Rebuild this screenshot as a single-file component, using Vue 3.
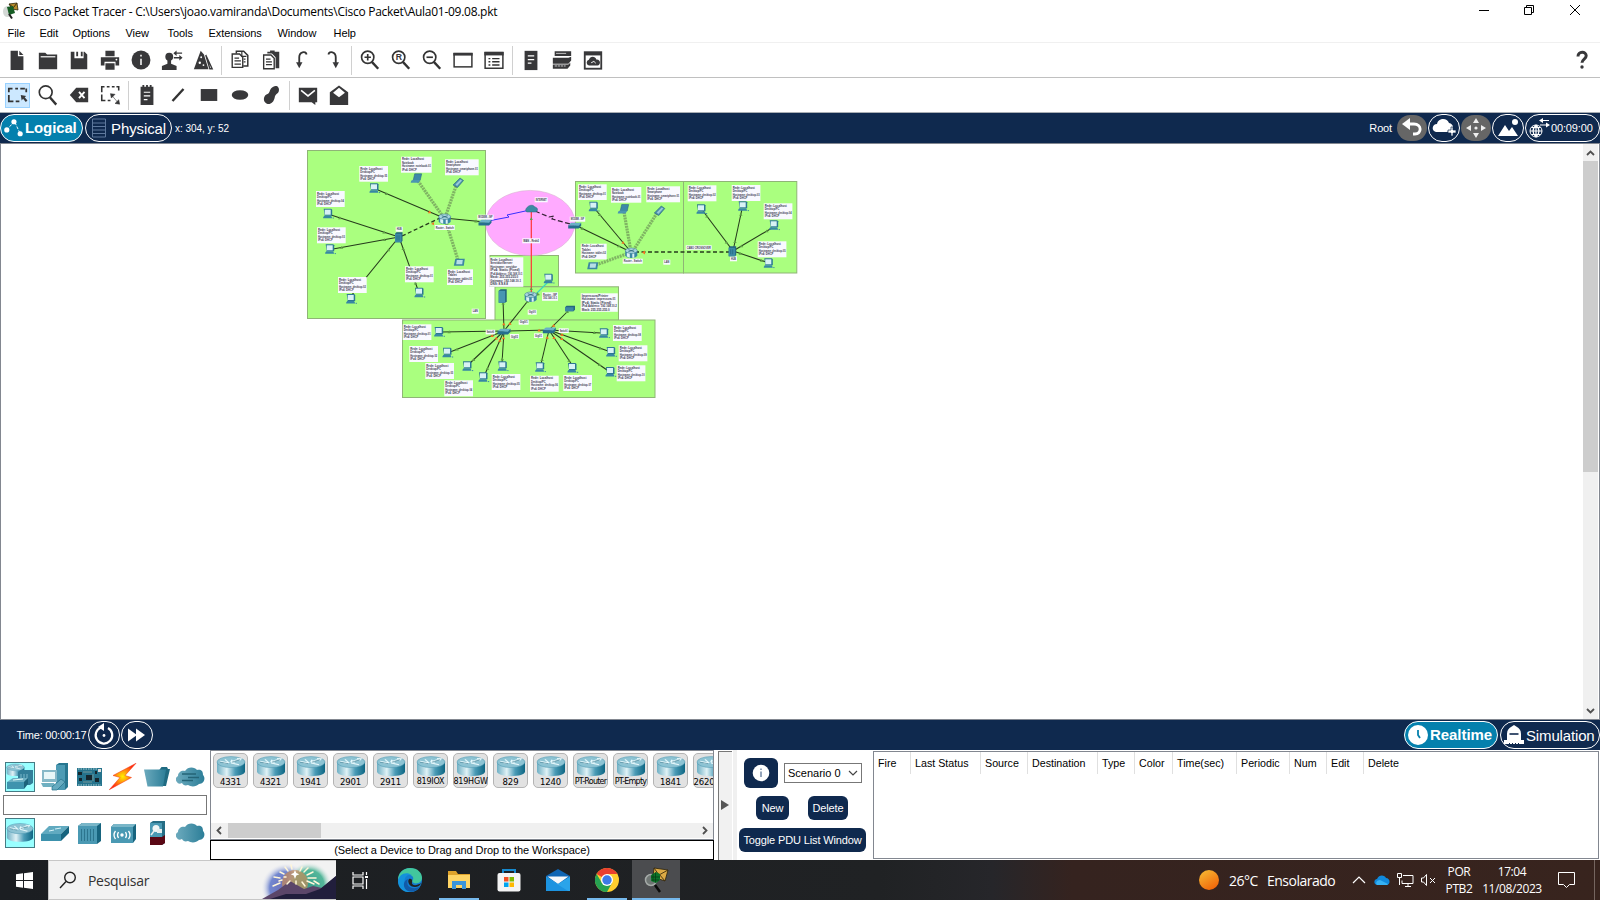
<script setup>
const menus = [
  ['File', 32], ['Edit', 33], ['Options', 53], ['View', 42], ['Tools', 41],
  ['Extensions', 69], ['Window', 56], ['Help', 40],
]

const ic = {
  file: '<path d="M5 2h8v6h6v15H5z"/><path d="M14.500 2l4.500 4.500h-4.500z"/>',
  folder: '<path d="M2 4h7l2 2h11v16H2z"/><path d="M4 8.500h16" stroke="#fff" stroke-width="1.300"/>',
  save: '<path d="M3 3h4v7h10V3h1l3 3v16H3z"/><path d="M9 3h2v5H9zM14 3h2v5h-2z"/>',
  print: '<path d="M7 2h10v6H7zM2 9h20v9h-4v-4H6v4H2zM7 15.500h10v7H7z"/><circle cx="19" cy="11.500" r="1" fill="#fff"/>',
  info: '<circle cx="12" cy="12" r="10.300"/><path d="M12 10.500v7M12 6.200v2" stroke="#ddd" stroke-width="2"/>',
  user: '<circle cx="9" cy="8.500" r="4.300"/><path d="M7 11h4v5l6 2.500V23H1v-4.500L7 16z"/><path d="M15 4.500h8M14 9.500h7" fill="none" stroke="#38383a" stroke-width="1.500"/><path d="M17 1.500v6l-3.500-3zM20 6.500v6l3.500-3z"/>',
  prism: '<path d="M9.500 2L13 6l5 16H2z"/><path d="M15 6.500l7 15h-2.500z" fill="none" stroke="#38383a" stroke-width="1.500"/><circle cx="10" cy="9" r="1" fill="#fff"/><circle cx="8.500" cy="15" r="1.300" fill="#fff"/><circle cx="12.500" cy="17.500" r="1" fill="#fff"/>',
  copy: '<path d="M3.500 5.500h8l3.500 3.500v11H3.500z" fill="#fff" stroke="#333" stroke-width="1.500"/><path d="M8 5V2.500h8l4.500 4.500v11.500h-5" fill="none" stroke="#333" stroke-width="1.600"/><path d="M6 10h5M6 13h7M6 16.500h7M16 8h2M16 11h2M16 14h2M14 3v5h5" fill="none" stroke="#333" stroke-width="1.300"/>',
  paste: '<path d="M8 3h3V1.500h5V3h5v18h-4V9l-4-4H8z"/><path d="M4 6.500h8l3.500 3.500v11.500H4z" fill="#fff" stroke="#333" stroke-width="1.500"/><path d="M6.500 11h5M6.500 14h6.500M6.500 17h6.500" stroke="#333" stroke-width="1.300"/>',
  undo: '<path d="M17 6c-1-4.500-8-3-8 3v7" fill="none" stroke="#333" stroke-width="2"/><path d="M5.500 14.500h7L9 21z"/>',
  redo: '<path d="M7 6c1-4.500 8-3 8 3v7" fill="none" stroke="#333" stroke-width="2"/><path d="M11.500 14.500h7L15 21z"/>',
  zin: '<circle cx="9.500" cy="9" r="6.700" fill="none" stroke="#333" stroke-width="1.800"/><path d="M14 14l7 7.500" stroke="#333" stroke-width="2.600"/><path d="M6 9h7M9.500 5.500v7" stroke="#333" stroke-width="1.800"/>',
  zr: '<circle cx="9.500" cy="9" r="6.700" fill="none" stroke="#333" stroke-width="1.800"/><path d="M14 14l7 7.500" stroke="#333" stroke-width="2.600"/><text x="6.300" y="12.500" font-size="9.500" font-weight="bold" font-family="Liberation Sans, sans-serif">R</text>',
  zout: '<circle cx="9.500" cy="9" r="6.700" fill="none" stroke="#333" stroke-width="1.800"/><path d="M14 14l7 7.500" stroke="#333" stroke-width="2.600"/><path d="M6 9h7" stroke="#333" stroke-width="1.800"/>',
  win: '<rect x="2.300" y="5" width="19.400" height="14.500" fill="none" stroke="#333" stroke-width="1.600"/><path d="M1.500 4.200h21v3h-21z"/>',
  list: '<rect x="2.300" y="4" width="19.400" height="17" fill="none" stroke="#333" stroke-width="1.600"/><path d="M1.500 3h21v4h-21z"/><path d="M6 10.500h2M10 10.500h8M6 14h2M10 14h8M6 17.500h2M10 17.500h8" stroke="#333" stroke-width="1.600"/>',
  doc: '<path d="M5 2h14v21H5z"/><path d="M8.500 7.500h7M8.500 11.500h7M8.500 15.500h4" stroke="#fff" stroke-width="1.300"/>',
  stack: '<path d="M4 2.500h18v5H4zM2 9.500h17l3-1v4l-3 3.500H2zM2 17h17l2-2v3l-3 3.500H2z"/><path d="M5.500 4.800h11" stroke="#ccc" stroke-width="1"/><path d="M4 18.500h12" stroke="#fff" stroke-width=".8" stroke-dasharray="2.500 .8"/>',
  cloudwin: '<path d="M2 2.500h20v20H2z"/><path d="M4 7h16v13.500H4z" fill="#fff"/><path d="M7.500 18a3.200 3.200 0 010-6.200C9 7 15 8 15.500 11.500 21 11 20.500 18 17 18z"/><path d="M10 15l3-1.500 2 2" stroke="#fff" fill="none"/>',
  select: '<path d="M2 9V5h4M9 5h3M14.500 5h5M21 5v4M2 12v7h5M9.500 19h4" fill="none" stroke="#333" stroke-width="1.900"/><path d="M15 12l6 1-1.700 1.500 3 3.500-1.800 1.500-3-3.500L16 18z"/>',
  mag: '<circle cx="9.500" cy="9" r="7" fill="none" stroke="#333" stroke-width="1.800"/><path d="M14 14.500l7 8" stroke="#333" stroke-width="2.600"/>',
  del: '<path d="M9 4h13v16H9L2 12z"/><path d="M12 8.500l6 7M18 8.500l-6 7" stroke="#fff" stroke-width="2"/>',
  resize: '<path d="M3 9V3h3M8.500 3h3M14 3h3M19 3h2.500v4M3 11.500V18h4M9.500 18h3" fill="none" stroke="#333" stroke-width="1.700"/><path d="M12.500 10.500l5 .8-4 4zM22.500 22l-5-.8 4-4zM14.500 13l5.500 6.500" stroke="#333" stroke-width=".6"/>',
  note: '<path d="M5 3h2V1h2v2h2V1h2v2h2V1h2v2h2v20H5z"/><path d="M8.500 9h7M8.500 13h7M8.500 17h4" stroke="#fff" stroke-width="1.300"/>',
  line: '<path d="M6 18.500L18 5.500" stroke="#333" stroke-width="2.600"/>',
  rect: '<path d="M3 5.500h18v13H3z"/>',
  oval: '<ellipse cx="12" cy="12" rx="9" ry="5.300"/>',
  free: '<path d="M12 5c4-5 10-3 8.500 3-1 3-4 3-4.500 7-1 5-5 8-8.500 6.500-4.500-2-4-8-.5-10 4-1 3-4 5-6.500z"/>',
  mail: '<path d="M2 4h20v16h-2v3l-4-3H2z"/><path d="M4.500 7l7.500 6 7.500-6" fill="none" stroke="#fff" stroke-width="1.700"/>',
  mailopen: '<path d="M2 9L12 1.500 22 9v14H2z"/><path d="M5.500 9.500L12 4l6.500 5.500L12 14.500z" fill="#fff"/>',
}
const bar1 = ['file', 'folder', 'save', 'print', 'info', 'user', 'prism', '|', 'copy', 'paste', 'undo', 'redo', '|', 'zin', 'zr', 'zout', 'win', 'list', '|', 'doc', 'stack', 'cloudwin']
const bar2 = ['select', 'mag', 'del', 'resize', '|', 'note', 'line', 'rect', 'oval', 'free', '|', 'mail', 'mailopen']

/* ---- topology ---- */
const zones = [
  [307.500, 150.5, 178, 168], [575.5, 181.5, 108, 91.500], [683.5, 181.5, 113.3, 91.500],
  [490, 255.5, 68.5, 31], [495, 286.800, 123.5, 33.500], [402.500, 320, 252.500, 77.500],
]
const pc = (h) => ['Rede: Localhost', 'Desktop/PC', 'Hostname: desktop-' + h, 'IPv4: DHCP']
const dev = (k, h) => ['Rede: Localhost', k, 'Hostname: ' + h, 'IPv4: DHCP']
const notes = [
  [359.3, 166, 28.7, 15.7, pc('05')], [401, 156.7, 30.7, 16, dev('Notebook', 'notebook-01')],
  [445, 159.3, 33.7, 16, dev('Smartphone', 'smartphone-01')], [316, 191, 28.700, 16, pc('04')],
  [317, 227.3, 28.7, 16, pc('03')], [338, 277, 28.7, 16, pc('02')], [405, 266.3, 28.700, 16, pc('01')],
  [447, 269.3, 26, 15.700, dev('Tablet', 'tablet-01')], [395.7, 226.700, 7, 5, ['HUB']],
  [434.7, 225, 20, 5, ['Router - Switch']], [471.7, 308.7, 7, 5, ['LAN']],
  [477.3, 214.7, 16.3, 5, ['MODEM - ISP']], [534.700, 197.3, 13, 5, ['INTERNET']],
  [569.7, 216.7, 15.5, 5, ['MODEM - ISP']], [522.3, 238.3, 17.7, 5, ['WAN - Rede2']],
  [489.3, 257.3, 34, 29.500, ['Rede: Localhost', 'Servidor/Server', 'Hostname: servidor', 'IPv4: Static (Fixed)', 'IPv4 Address: 192.168.10.1', 'Mask: 255.255.255.0', 'Gateway: 192.168.10.1', 'DNS: 8.8.8.8']],
  [542, 292.3, 16, 8.500, ['Router - ISP', '192.168.10.1']], [527.7, 309.7, 9, 5, ['Gig0/0']],
  [518.7, 319.7, 10, 5, ['Gig0/1']],
  [580.700, 293.3, 37, 18.500, ['Impressora/Printer', 'Hostname: impressora-01', 'IPv4: Static (Fixed)', 'IPv4 Address: 192.168.10.2', 'Mask: 255.255.255.0']],
  [578, 184.3, 28.700, 15.700, pc('01')], [611, 187, 30.3, 15.7, dev('Notebook', 'notebook-01')],
  [580.7, 243.7, 26, 15.7, dev('Tablet', 'tablet-02')], [622.7, 258.7, 20, 5, ['Router - Switch']],
  [646.3, 186.3, 33.7, 16, dev('Smartphone', 'smartphone-01')], [687.7, 185.3, 28.7, 16, pc('02')],
  [731.7, 185, 28.7, 16, pc('03')], [763.7, 203.3, 28.7, 16, pc('04')], [757.7, 241.3, 28.7, 16, pc('05')],
  [663.3, 259.7, 7, 5, ['LAN']], [685.7, 245.3, 26, 4.5, ['CABO CROSSOVER']], [730, 256.3, 7, 5, ['HUB']],
  [402.7, 324.3, 28.700, 15.7, pc('01')], [409.3, 346, 28.7, 16, pc('02')], [425.3, 363, 28.7, 16, pc('03')],
  [444.3, 380.3, 28.7, 16, pc('04')], [491.7, 374, 28.7, 16, pc('05')], [530, 375.7, 28.7, 16, pc('06')],
  [563.3, 375, 28.700, 16, pc('07')], [613, 325, 28.7, 16, pc('08')], [618.700, 345.3, 28.7, 16, pc('09')],
  [616.7, 365.3, 28.7, 16, pc('10')], [485.700, 329.7, 9.500, 4.700, ['Switch0']], [510, 334, 9, 4.700, ['Gig0/2']],
  [534, 333.3, 9, 4.700, ['Gig0/1']], [558.7, 328.3, 10, 4.700, ['Switch1']],
]
const noteLen = (n, t) => 10 * (n[4].length < 3 ? n[2] - 2 : Math.min(n[2] - 1.8, t.length * 1.47))
const devices = [
  ['pc', 374, 188.3], ['laptop', 416.7, 178.3], ['phone', 458, 183], ['pc', 327.7, 213.7], ['pc', 329.7, 249.3],
  ['pc', 350.7, 299], ['pc', 419, 292.7], ['router', 444.7, 218.7], ['hub', 399, 237.3], ['tablet', 459.3, 262.3],
  ['sw', 485, 222.3], ['cloud', 531.7, 209], ['sw', 574.7, 225.3], ['pc', 593.3, 206.7], ['laptop', 623.7, 209],
  ['router', 631.3, 252.700], ['tablet', 592.7, 265.7], ['pc', 548.3, 278.7], ['server', 502.7, 296.3],
  ['router', 530.7, 296.7], ['printer', 570, 308.7], ['phone', 659.3, 211], ['pc', 701, 209.3], ['pc', 742.7, 206.3],
  ['pc', 773.7, 225.3], ['pc', 768.3, 263.3], ['hub', 732.7, 251.3], ['sw', 504, 331.3], ['sw', 549.3, 330],
  ['pc', 438.7, 332], ['pc', 447, 352.700], ['pc', 467, 366.3], ['pc', 483, 377.3], ['pc', 502.3, 366.3],
  ['pc', 539.7, 367.3], ['pc', 572, 368], ['pc', 603.7, 333.3], ['pc', 610.7, 352], ['pc', 610, 372],
]
const wires = [
  [378, 190, 444, 218], [331, 215, 399, 237], [333, 249, 399, 237], [351, 296, 399, 237], [418, 290, 399, 237],
  [444, 218, 485, 222], [575, 225, 631, 252], [595, 209, 631, 252], [703, 211, 733, 251], [742, 209, 733, 251],
  [772, 228, 733, 251], [766, 262, 733, 251], [503, 299, 504, 331], [531, 297, 504, 331], [570, 309, 549, 330],
  [504, 331, 549, 330], [441, 332, 504, 331], [450, 352, 504, 331], [469, 364, 504, 331], [485, 374, 504, 331],
  [502, 363, 504, 331], [541, 364, 549, 330], [572, 365, 549, 330], [601, 333, 549, 330], [608, 351, 549, 330], [607, 370, 549, 330],
]
const radios = [[418, 181, 444, 218], [456, 186, 445, 218], [458, 260, 446, 222], [624, 212, 631, 252], [657, 213, 633, 251], [596, 265, 629, 253]]
const at = (w, t) => [w[0] + (w[2] - w[0]) * t, w[1] + (w[3] - w[1]) * t]
const dots = wires.flatMap((w, i) => {
  const a = at(w, 0.13)
  const b = at(w, 0.78)
  const hot = i === 0 || i === 7 || i >= 12
  return [[a[0], a[1], '#5f9e46'], [b[0], b[1], hot ? '#f27421' : '#5f9e46']]
})
const glyph = {
  pc: '<path d="M-4-5h7.500l1 1v6H-3z" fill="#2d7893"/><path d="M-3-4h6v5h-6z" fill="#d8f2f5"/><path d="M-4.500 3.500l1-1.500h7l1 2.500h-9z" fill="#3787a4"/><path d="M5 4.300h1.200" stroke="#3787a4"/>',
  laptop: '<path d="M-2-4.500h7L3.500 2h-7z" fill="#3c89a8" stroke="#225f7b" stroke-width=".5"/><path d="M-5.500 2.500l2-1h7L2 4.500h-8z" fill="#4b96b2"/>',
  phone: '<path d="M-5 2L2-5l3.500 2.500-6 7z" fill="#4a91ab" stroke="#27647d" stroke-width=".6"/><path d="M-2.500 1.500l5-5 1.500 1-5 5.500z" fill="#9ac9d8"/>',
  tablet: '<path d="M-4-3.500h9.500l-1 7h-10z" fill="#3c87a2"/><path d="M-2.500-2.300h6l-.6 4.300h-6z" fill="#b7dfe6"/>',
  router: '<path d="M-6-2v4.500a6 2.800 0 0012 0V-2z" fill="#3b88a5"/><path d="M-4.500 0h3v5l-3-1.300zM1 .5h2v4.500H1z" fill="#dbf1f5"/><ellipse cy="-2" rx="6" ry="2.700" fill="#a9d5df" stroke="#2f738b" stroke-width=".5"/><path d="M-3-3l6 2M3-3l-6 2" stroke="#245e74" stroke-width=".7"/>',
  sw: '<path d="M-6.500 0l3-2.500H6.500L4 1z" fill="#69b1c7"/><path d="M-6.500 0L4 .5V3.300h-10.500zM4 .5l2.500-3v3L4 3.300z" fill="#256f8e"/>',
  hub: '<path d="M-4-3.500l1.500-1.500h6v8.500L2.500 5H-4z" fill="#23647f"/><path d="M-4-3.500h6.500V5H-4z" fill="#3b89a6"/><path d="M-2-2v5M0-2v5" stroke="#205d76" stroke-width=".6"/>',
  server: '<path d="M-4-5.500l2-1.500h6V5L2.500 6.500H-4z" fill="#20607b"/><path d="M-4-5.500h6.500v12H-4z" fill="#4795b2"/>',
  cloud: '<path d="M-5 3a2.500 2.500 0 010-4C-3-4.500 2-4.500 3-2c3 0 4 4 1 5z" fill="#3d8ba4" stroke="#29687c" stroke-width=".5"/>',
  printer: '<path d="M-5-1.500l1.500-1.500h8.500v4l-1.500 1.500H-5z" fill="#246680"/><path d="M-5-1.500h8.500v4H-5z" fill="#3d87a3"/>',
}

/* ---- device palette ---- */
const routerSvg = '<path d="M1 9v12c0 3.500 6.500 6 14 6s14-2.500 14-6V9z" fill="url(#cyl)"/><ellipse cx="15" cy="9" rx="14" ry="7" fill="#8dc3d3" stroke="#3f8eaa" stroke-width=".5"/><path d="M4 8l8 2M9 5.500l3.500 4-5 .5M15 10l8 2.500M24 5l-8 3M21 4.500l4 .2-1.500 2.300M16 6l-1 2.500 4 .5" fill="none" stroke="#e4f7fb" stroke-width="1.400"/><path d="M4 9l8 2M16 9l8-3" stroke="#245f74" stroke-width=".5"/>'
const cloudPath = '<path transform="translate(1 0)" d="M5 21a4 4 0 01-4-7c0-4 4-6 7-5 3-5 10-4 12-1 5-1 6 2 6 5 3 3 1 9-4 9-3 3-8 3-11 1-3 1-5 0-6-2z" fill="url(#cloudg)"/>'
const cats1 = [
  '<svg x="1" y="1" width="19" height="14" viewBox="0 0 30 29" preserveAspectRatio="none">' + routerSvg + '</svg><path d="M13 10l3-2h12v13l-3 2H13z" fill="#327e99"/><path d="M16 12v10M19 12v10M22 12v10" stroke="#7ab8ca"/><path d="M2 20l6-4h15l-4 4v7H2z" fill="#6db0c3"/><path d="M2 20h17v7H2z" fill="#3f93ae"/><path d="M19 20l4-4v6l-4 5z" fill="#1c637b"/><path d="M8 18l10-1" stroke="#e3fafa"/>',
  '<path d="M16 3l3-2h9v24l-3 3h-9z" fill="#277790"/><path d="M16 3h9v25h-9z" fill="#4c9bb4"/><path d="M2 8h15v12H2z" fill="#87b9c8"/><path d="M4 10h11v7H4z" fill="#e8f7f8"/><path d="M1 21h13l2 4H3z" fill="#70b0c1"/><path d="M12 25l9-8 4 3-8 8h-5z" fill="#66abc0" stroke="#25718a" stroke-width=".7"/>',
  '<path d="M3 6h25v18H3z" fill="#25738c"/><path d="M4 7h20M4 23h23" stroke="#b1d5d9" stroke-dasharray="1.500 1"/><path d="M12 13h6v5h-6zM4 10h4v3H4zM21 16h4v4h-4zM21 9h2v3h-2zM5 16h3v3H5z" fill="#15262d"/><path d="M24 7h3v3h-3z" fill="#ddd"/><path d="M9 10h9M9 20h9M19 12v7" stroke="#a7b3a2" stroke-width=".6"/>',
  '<path d="M28 1.300L5 13.500l7 2L1.300 27.700l22.200-12.200-6.500-2z" fill="url(#bolt)" stroke="#f33213" stroke-width=".5"/>',
  '<path d="M18 7l1.500-2H25l1 2h2l-4 17H6z" fill="#1f6b82"/><path d="M2 7.500h22l-3 17H5.500z" fill="url(#cloudg)"/>',
  cloudPath + '<path d="M6 12h14M12 15.500h11M6 18.500h11" stroke="#246477" stroke-width="1.300"/>',
]
const cats2 = [
  '<svg x="1" y="4" width="28" height="22" viewBox="0 0 30 30" preserveAspectRatio="none">' + routerSvg + '</svg>',
  '<path d="M1 16l8-8h20l-8 8v6H1z" fill="#61aac0"/><path d="M1 16h20v7H1z" fill="#3c91ac"/><path d="M21 16l8-8v7l-8 8z" fill="#17647e"/><path d="M9 13l5-1M15 11l6-1" stroke="#d7f3f8"/>',
  '<path d="M4 8l4-3h19v18l-4 3H4z" fill="#17647e"/><path d="M4 8l4-3h19l-4 3z" fill="#79b6c8"/><path d="M4 8h19v18H4z" fill="#4a99b3"/><path d="M7.500 11v12M10.500 11v12M13.500 11v12M16.500 11v12M19.500 11v12" stroke="#256c84" stroke-width=".8"/>',
  '<path d="M3 9l3-3h22v15l-3 4H3z" fill="#17647e"/><path d="M3 9l3-3h22l-3 3z" fill="#79b6c8"/><path d="M3 9h22v16H3z" fill="#4a99b3"/><circle cx="14" cy="17" r="1.700" fill="#fff"/><path d="M10.500 14q-2 3 0 6M7.500 13q-3 4 0 8M17.500 14q2 3 0 6M20.500 13q3 4 0 8" fill="none" stroke="#fff" stroke-width="1.300"/>',
  '<path d="M8 5l3-2h12v22l-3 2H8z" fill="#256c84"/><path d="M8 5h12v14H8z" fill="#4a99b3"/><path d="M8 19h12v8H8zM20 19l3-2v8l-3 2z" fill="#5a0714"/><circle cx="14" cy="10.500" r="3.500" fill="#f1f6f6"/><path d="M15 11h5v4h-5z" fill="#e6eeee"/><path d="M12 13l-3 4" stroke="#e6eeee" stroke-width="1.600"/>',
  cloudPath,
]
const models = ['4331', '4321', '1941', '2901', '2911', '819IOX', '819HGW', '829', '1240', 'PT-Router', 'PT-Empty', '1841', '2620XM']
const cols = [['Fire', 37], ['Last Status', 70], ['Source', 47], ['Destination', 70], ['Type', 37], ['Color', 38], ['Time(sec)', 64], ['Periodic', 53], ['Num', 37], ['Edit', 37], ['Delete', 120]]
</script>

<template>
  <div class="app">
    <svg class="defs" width="0" height="0">
      <defs>
        <linearGradient id="cyl"><stop offset="0" stop-color="#6eafc4" /><stop offset=".35" stop-color="#e0f2f6" /><stop offset=".65" stop-color="#4a9bb6" /><stop offset="1" stop-color="#0e6683" /></linearGradient>
        <linearGradient id="cloudg"><stop offset="0" stop-color="#6caabd" /><stop offset="1" stop-color="#2c7e98" /></linearGradient>
        <radialGradient id="bolt"><stop offset="0" stop-color="#fff000" /><stop offset=".6" stop-color="#ff7a10" /><stop offset="1" stop-color="#ff2a10" /></radialGradient>
        <linearGradient id="sun" x2=".6" y2="1"><stop offset="0" stop-color="#f8bf35" /><stop offset="1" stop-color="#f0680b" /></linearGradient>
      </defs>
    </svg>

    <header class="title">
      <svg width="20" height="24" viewBox="0 0 20 24">
        <ellipse cx="6.500" cy="11.500" rx="4.500" ry="5.500" fill="#d3d8d5" />
        <path d="M8 4l8-1 1 7-6-1z" fill="#b58a2a" stroke="#2c2408" stroke-width=".8" /><path d="M8 4l4.500 3.500L16 3" fill="none" stroke="#3b2c0b" />
        <path d="M6 7l6-1 2 7-6 2z" fill="#165d24" /><path d="M8 14l3 4.500" stroke="#222" stroke-width="2" />
      </svg>
      <span class="title-text">Cisco Packet Tracer - C:\Users\joao.vamiranda\Documents\Cisco Packet\Aula01-09.08.pkt</span>
      <svg class="winctl" width="130" height="24" viewBox="0 0 130 24" fill="none" stroke="#000">
        <path d="M9 10.500h10M54.500 7.500h7v7h-7zM56.500 7.500v-2h7v7h-2M100 5l10 10M110 5l-10 10" />
      </svg>
    </header>
    <nav class="menu"><span v-for="m in menus" :key="m[0]" :style="{ width: m[1] + 'px' }">{{ m[0] }}</span></nav>

    <div class="tools first">
      <template v-for="(n, i) in bar1" :key="i">
        <i v-if="n === '|'" class="sep" />
        <b v-else class="tool"><svg width="22" height="22" viewBox="0 0 24 24" fill="#38383a" v-html="ic[n]" /></b>
      </template>
      <svg class="help" width="12" height="20" viewBox="0 0 12 20"><path d="M2 6.500C2 1 10.200 1 10.200 5.800c0 3.400-4.200 3.200-4.200 7" fill="none" stroke="#38383a" stroke-width="3" /><circle cx="6" cy="17" r="1.700" fill="#38383a" /></svg>
    </div>
    <div class="tools second">
      <template v-for="(n, i) in bar2" :key="i">
        <i v-if="n === '|'" class="sep" />
        <b v-else class="tool" :class="{ on: n === 'select' }"><svg width="22" height="22" viewBox="0 0 24 24" fill="#38383a" v-html="ic[n]" /></b>
      </template>
    </div>

    <div class="navy">
      <div class="pill blue logical">
        <svg width="22" height="26" viewBox="0 0 23 26"><path d="M5 15l8-9 6 13" fill="none" stroke="#fff" stroke-dasharray="3 1.500" /><circle cx="5" cy="15" r="2.700" fill="#fff" /><circle cx="12.500" cy="6.500" r="2.700" fill="#fff" /><circle cx="19" cy="19" r="2.700" fill="#fff" /></svg>
        <span>Logical</span>
      </div>
      <div class="pill physical">
        <svg width="16" height="20" viewBox="0 0 16 20"><path d="M1.500 1v18h13V1zM1.500 5h13M1.500 8.500h13M1.500 12h13M1.500 15.500h13" fill="none" stroke="#5e789c" /></svg>
        <span>Physical</span>
      </div>
      <span class="xy">x: 304, y: 52</span>
      <span class="root">Root</span>
      <div class="round gray"><svg width="24" height="24" viewBox="0 0 24 24"><path d="M8 8h6c8 0 8 10 1 10h-2" fill="none" stroke="#fff" stroke-width="2.800" /><path d="M2 8l8-6v12z" fill="#fff" /></svg></div>
      <div class="round"><svg width="26" height="24" viewBox="0 0 26 24" fill="#fff"><path d="M5 16c-5-1-4-8 1-8 1-6 10-7 12-1 5 1 5 6 2 7l-4 2z" /><path d="M17 14h3v-3h2v3h3v3h-3v3h-2v-3h-3z" stroke="#0f294e" stroke-width=".7" /></svg></div>
      <div class="round gray"><svg width="24" height="24" viewBox="0 0 24 24" fill="#eee"><path d="M12 2l3 5H9zM12 22l3-5H9zM2 12l5-3v6zM22 12l-5-3v6z" /><circle cx="12" cy="12" r="1.600" /></svg></div>
      <div class="round"><svg width="24" height="24" viewBox="0 0 24 24" fill="#fff"><path d="M2 20L9 9l4 6 3-4 6 9z" /><circle cx="19" cy="6" r="3" /></svg></div>
      <div class="pill clock">
        <svg width="22" height="24" viewBox="0 0 22 24" fill="none" stroke="#fff"><circle cx="8" cy="15" r="6" /><path d="M2 15h12M8 9v12M3.500 11.500h9M3.500 18.500h9M8 9q-6 6 0 12M8 9q6 6 0 12M13 4.500h8M12 9h8" stroke-width="1.200" /><path d="M15 2l-4 2.500 4 2.500zM18 6.500l4 2.500-4 2.500z" fill="#fff" stroke="none" /></svg>
        <span>00:09:00</span>
      </div>
    </div>

    <main class="work">
      <svg class="topo" width="820" height="420" viewBox="0 143 820 420">
        <rect v-for="(z, i) in zones" :key="'z' + i" :x="z[0]" :y="z[1]" :width="z[2]" :height="z[3]" fill="#aaff7f" stroke="#8fb576" stroke-width="1" />
        <ellipse cx="530.300" cy="223" rx="44.700" ry="32.600" fill="#ffaaff" stroke="#d3a8c8" stroke-width=".5" />
        <line v-for="(w, i) in radios" :key="'r' + i" :x1="w[0]" :y1="w[1]" :x2="w[2]" :y2="w[3]" stroke="#7fb463" stroke-width="3.200" stroke-dasharray="2 .8" />
        <line v-for="(w, i) in wires" :key="'w' + i" :x1="w[0]" :y1="w[1]" :x2="w[2]" :y2="w[3]" stroke="#263b1c" stroke-width="1.050" />
        <path d="M402 236l38-18M635 252h96" stroke="#263b1c" stroke-width="1.300" stroke-dasharray="4 2.500" />
        <path d="M488 221l21-4-2-2 23-5" fill="none" stroke="#382fff" />
        <path d="M535 211l14 6 5-1-2 3 22 6" fill="none" stroke="#362336" stroke-width="1.200" stroke-dasharray="5 2.500" />
        <path d="M531.300 211v83" stroke="#ff3535" stroke-width="1.200" /><path d="M548 282l-14 14" stroke="#39d6bd" stroke-width="1.200" />
        <path v-for="(d, i) in dots" :key="'d' + i" :transform="`translate(${d[0]} ${d[1]})`" d="M0-1.500l1.700 2.800h-3.400z" :fill="d[2]" />
        <path d="M431 224l3-2v3zM642 252.500l3-2v4z" fill="#f27421" />
        <path d="M531.300 217l1.500 3h-3zM531.300 287l1.500 3h-3zM537 292l3 3-4 1z" fill="#5f9e46" />
        <g v-for="(n, i) in notes" :key="'n' + i">
          <rect :x="n[0]" :y="n[1]" :width="n[2]" :height="n[3]" fill="#f9f9ff" />
          <text v-for="(t, j) in n[4]" :key="j" :transform="`translate(${n[0] + 1} ${n[1] + 3.6 + j * 3.45}) scale(.1)`" class="tiny" :textLength="noteLen(n, t)" lengthAdjust="spacingAndGlyphs">{{ t }}</text>
        </g>
        <g v-for="(d, i) in devices" :key="'g' + i" :transform="`translate(${d[1]} ${d[2]})`" v-html="glyph[d[0]]" />
      </svg>
      <div class="vscroll">
        <svg width="15" height="17" viewBox="0 0 15 17"><path d="M4 11l3.500-3.500L11 11" fill="none" stroke="#505050" stroke-width="1.800" /></svg>
        <div class="vthumb" />
        <svg width="15" height="17" viewBox="0 0 15 17"><path d="M4 7l3.500 3.500L11 7" fill="none" stroke="#505050" stroke-width="1.800" /></svg>
      </div>
    </main>

    <div class="navy low">
      <span class="time">Time: 00:00:17</span>
      <div class="round"><svg width="24" height="24" viewBox="0 0 24 24"><path d="M9 4.500A8.300 8.300 0 1016 5" fill="none" stroke="#fff" stroke-width="2.200" /><path d="M6 4l6-4v8z" fill="#fff" /><circle cx="12" cy="12.500" r="1.400" fill="#fff" /></svg></div>
      <div class="round"><svg width="24" height="24" viewBox="0 0 24 24" fill="#fff"><path d="M3 5.500l9 6.500-9 6.500zM11 5.500l9 6.500-9 6.500z" /></svg></div>
      <div class="pill blue real"><svg width="22" height="22" viewBox="0 0 22 22"><circle cx="11" cy="11" r="10" fill="#fff" /><path d="M11 6v5l2 3" fill="none" stroke="#0681ad" stroke-width="1.800" /></svg><span>Realtime</span></div>
      <div class="pill sim"><svg width="20" height="20" viewBox="0 0 20 20"><path d="M3 15V9c0-4 2-6 4-7l3-2 3 2c2 1 4 3 4 7v6h3v4H0v-4z" fill="#fff" /><path d="M5.500 9h9" stroke="#0f294e" stroke-width="1.600" /><path d="M5 18.500h10" stroke="#0f294e" stroke-dasharray="1 2" /></svg><span>Simulation</span></div>
    </div>

    <section class="dock">
      <div class="cats">
        <div class="catrow"><svg v-for="(c, i) in cats1" :key="i" :class="{ sel: i === 0 }" width="30" height="30" viewBox="0 0 30 30" v-html="c" /></div>
        <div class="search" />
        <div class="catrow"><svg v-for="(c, i) in cats2" :key="i" :class="{ sel: i === 0 }" width="30" height="30" viewBox="0 0 30 30" v-html="c" /></div>
      </div>
      <div class="palette">
        <div class="list">
          <div class="models">
            <div v-for="m in models" :key="m" class="model" :class="{ tight: m.startsWith('PT') }">
              <svg width="30" height="22" viewBox="0 0 30 28" preserveAspectRatio="none" v-html="routerSvg" />
              <span>{{ m }}</span>
            </div>
          </div>
          <div class="hscroll">
            <svg width="17" height="15" viewBox="0 0 17 15"><path d="M10 4L6.500 7.500 10 11" fill="none" stroke="#505050" stroke-width="1.800" /></svg>
            <div class="hthumb" />
            <svg width="17" height="15" viewBox="0 0 17 15"><path d="M7 4l3.500 3.500L7 11" fill="none" stroke="#505050" stroke-width="1.800" /></svg>
          </div>
        </div>
        <div class="hint">(Select a Device to Drag and Drop to the Workspace)</div>
      </div>
      <div class="split"><svg width="9" height="12" viewBox="0 0 9 12"><path d="M0 0l8 5-8 5z" fill="#555" /></svg></div>
      <div class="scen">
        <div class="row r1">
          <div class="btn ibtn"><svg width="18" height="18" viewBox="0 0 18 18"><circle cx="9" cy="9" r="8.300" fill="#fff" /><path d="M9 7.500V13M9 4.500v1.600" stroke="#7187a4" stroke-width="1.500" /></svg></div>
          <div class="combo"><span>Scenario 0</span><svg width="10" height="8" viewBox="0 0 10 8"><path d="M1 2l4 4 4-4" fill="none" stroke="#444" stroke-width="1.200" /></svg></div>
        </div>
        <div class="row r2"><div class="btn new">New</div><div class="btn delete">Delete</div></div>
        <div class="btn toggle">Toggle PDU List Window</div>
      </div>
      <div class="pdu"><span v-for="c in cols" :key="c[0]" :style="{ width: c[1] + 'px' }">{{ c[0] }}</span></div>
    </section>

    <footer class="task">
      <div class="start"><svg width="17" height="17" viewBox="0 0 17 17" fill="#fff"><path d="M0 2.300l7-1V8H0zM8 1.200L17 0v8H8zM0 9h7v6.700l-7-1zM8 9h9v8l-9-1.200z" /></svg></div>
      <div class="find">
        <svg width="18" height="18" viewBox="0 0 18 18" fill="none" stroke="#222" stroke-width="1.400"><circle cx="11" cy="6.500" r="5.300" /><path d="M7 10.500L1 17" /></svg>
        <span>Pesquisar</span>
        <svg class="fire" width="74" height="38" viewBox="0 0 74 38">
          <defs>
            <radialGradient id="f1"><stop offset="0" stop-color="#6b6bb5" /><stop offset=".65" stop-color="#7287cf" /><stop offset="1" stop-color="#f2f2f2" stop-opacity="0" /></radialGradient>
            <radialGradient id="f2"><stop offset="0" stop-color="#389d8c" /><stop offset=".65" stop-color="#55b79a" /><stop offset="1" stop-color="#f2f2f2" stop-opacity="0" /></radialGradient>
          </defs>
          <circle cx="24" cy="27" r="25" fill="url(#f1)" /><circle cx="47" cy="24" r="23" fill="url(#f2)" /><circle cx="33" cy="22" r="13" fill="#c88c58" opacity=".7" />
          <path d="M0 38l16-9 12-9 14 8 9-3 9 2 14-12v23z" fill="#5b4669" /><path d="M8 38l16-5 20 0 14-5 16-13v23z" fill="#211e3c" />
          <g stroke="#fff6d8" stroke-width="1.500" stroke-linecap="round"><path d="M30 8l-1-4M26 10l-3-4M22 13l-4-2M18 17l-6-1M18 22l-7 3M20 19l-3 1M38 10l2-4M42 11l4-4M45 14l6-3M46 17l8 0M45 20l7 3M40 21l3 4M28 20l-3 3M24 16l-2 0M52 20l5 3M34 20v3" /></g>
          <path d="M33 9l1.300 3 3 1.300-3 1.300-1.300 3.400-1.300-3.400-3-1.300 3-1.300z" fill="#fff" />
        </svg>
      </div>
      <div class="app-btn"><svg width="17" height="17" viewBox="0 0 17 17" fill="none" stroke="#fff" stroke-width="1.200"><path d="M1 0v3h10V0M1 5h10v7H1zM1 17v-3h10v3M14.500 0v3M14.500 7v10" /><path d="M13 4h3v2h-3z" fill="#fff" stroke="none" /></svg></div>
      <div class="app-btn edge"><svg width="24" height="24" viewBox="0 0 24 24"><circle cx="12" cy="12" r="12" fill="#147ed2" /><path d="M0 12C0 5 5 0 12 0c8 0 12 5 12 10 0 6-9 7-10 3 4-4-2-8-7-6-4 1-6 3-7 5z" fill="#42c79d" /><path d="M0 13C1 6 8 3 14 7 7 5 4 14 9 19c4 5 10 3 13 0-6 8-22 7-22-6z" fill="#1492dc" /><path d="M10 11c-3 8 4 11 12 8-3 4-8 6-12 4-5-2-6-10 0-12z" fill="#125ba9" /><path d="M11 11c2-1 4 1 3 3-1 4 5 4 9 1-1 5-10 5-12 1-1-2-1-4 0-5z" fill="#222" /></svg></div>
      <div class="app-btn open"><svg width="22" height="20" viewBox="0 0 22 20"><path d="M0 1h8l2 3h12v14H0z" fill="#dfa32b" /><path d="M0 5h22v13H0z" fill="#ffd565" /><path d="M4 11h14v8h-4v-4H8v4H4z" fill="#3c95da" /></svg></div>
      <div class="app-btn"><svg width="24" height="24" viewBox="0 0 24 24"><path d="M6 7V2h12v5" fill="none" stroke="#1689ce" stroke-width="2" /><rect x=".5" y="5" width="23" height="18.500" rx="2" fill="#f4f4f4" /><path d="M7 9h4.500v4.500H7z" fill="#f25022" /><path d="M12.500 9H17v4.500h-4.500z" fill="#7fba00" /><path d="M7 14.500h4.500V19H7z" fill="#00a4ef" /><path d="M12.500 14.500H17V19h-4.500z" fill="#ffb900" /></svg></div>
      <div class="app-btn"><svg width="24" height="24" viewBox="0 0 24 24"><path d="M0 8L12 1l12 7v15H0z" fill="#0f65b3" /><path d="M1.500 8.500h21L12 16z" fill="#f6f8fa" /><path d="M0 8.500l12 7.500 12-7.500V23H0z" fill="#2aa4ea" /><path d="M0 9l22 14H0z" fill="#1c93e0" /></svg></div>
      <div class="app-btn open"><svg width="24" height="24" viewBox="0 0 24 24"><circle cx="12" cy="12" r="12" fill="#ffce2e" /><path d="M12 12L1.600 6A12 12 0 0122.400 6H12z" fill="#e9402f" /><path d="M1.600 6A12 12 0 0012 24l5-9-5-3-5 3z" fill="#26a252" /><circle cx="12" cy="12" r="6" fill="#fff" /><circle cx="12" cy="12" r="4.700" fill="#3c7be8" /></svg></div>
      <div class="app-btn open current"><svg width="26" height="26" viewBox="0 0 26 26"><circle cx="8" cy="13" r="5.500" fill="#6f7674" stroke="#a5aaa8" stroke-width="1.500" /><path d="M11 1l14 2-3 11-12-4z" fill="#dcaa45" stroke="#2b220c" stroke-width=".8" /><path d="M11 1l5 7 9-5M16 7l6 7" fill="none" stroke="#3e2c0c" stroke-width=".9" /><path d="M8 8l5-3 4 2v6l-4 3-5-2z" fill="#0b762a" /><path d="M8 10h9M9 13h7M12.500 5.500v10M10 7v7" stroke="#073e14" stroke-width=".8" /><path d="M12 18l5 7" stroke="#0b0b0b" stroke-width="2.500" /></svg></div>

      <div class="tray">
        <svg class="sun" width="20" height="20" viewBox="0 0 20 20"><circle cx="10" cy="10" r="10" fill="url(#sun)" /></svg>
        <span class="temp">26°C</span><span class="sunny">Ensolarado</span>
        <svg class="caret" width="14" height="10" viewBox="0 0 14 10"><path d="M1 8l6-6 6 6" fill="none" stroke="#fff" stroke-width="1.200" /></svg>
        <svg class="one" width="16" height="11" viewBox="0 0 16 11"><path d="M3 10C-1 9 0 4 3 4 5-1 11 0 12 3c4 0 5 6 1 7z" fill="#1089dc" /><path d="M3 10c-2-2 0-5 3-5l8 4-1 1z" fill="#36b2f4" /></svg>
        <svg class="net" width="17" height="14" viewBox="0 0 17 14" fill="none" stroke="#fff"><path d="M6 2.500h10v8H5v-3M8 13.500h6M11 11v2M.500.500h4v4h-4zM2.500 5v7" /></svg>
        <svg class="vol" width="15" height="14" viewBox="0 0 15 14" fill="none" stroke="#fff"><path d="M.500 5h2l3-3.500v11L2.500 9h-2zM9 5l5 5M14 5l-5 5" /></svg>
        <div class="two lang"><span>POR</span><span>PTB2</span></div>
        <div class="two date"><span>17:04</span><span>11/08/2023</span></div>
        <svg class="bell" width="17" height="17" viewBox="0 0 17 17" fill="none" stroke="#fff"><path d="M.500.500h16v12h-5l-3 3-3-3h-5z" /></svg>
        <i class="peek" />
      </div>
    </footer>
  </div>
</template>

<style>
html, body { margin: 0; overflow: hidden; background: #fff; }
</style>
<style scoped>
.app { width: 1600px; height: 900px; display: flex; flex-direction: column; background: #fff; color: #000; font-family: "Liberation Sans", Arial, sans-serif; font-size: 11px; overflow: hidden; position: relative; white-space: nowrap; }
.app * { box-sizing: border-box; }
svg { display: block; flex: none; }
.defs { position: absolute; }
.title { height: 24px; display: flex; align-items: center; flex: none; }
.title svg:first-child { margin-left: 1px; }
.title-text { font: 12px/24px "Open Sans", "Noto Sans", sans-serif; margin-left: 2px; letter-spacing: -.27px; }
.winctl { margin-left: auto; }
.menu { height: 19px; flex: none; padding-left: 7.500px; display: flex; align-items: center; border-bottom: 1px solid #f0f0f0; }
.menu span { flex: none; letter-spacing: -.05px; }
.tools { display: flex; align-items: center; flex: none; padding-left: 1px; }
.first { height: 35px; border-bottom: 1px solid #c0c0c0; }
.second { height: 35px; border-bottom: 1px solid #a9aeb4; }
.tool { width: 31px; height: 25px; display: flex; align-items: center; justify-content: center; flex: none; }
.tool.on { width: 25px; margin: 0 2px 0 4px; background: #cce8ff; border: 1px solid #99d1ff; }
.sep { width: 1px; height: 29px; background: #d0d0d0; margin: 0 2.500px; flex: none; }
.help { margin-left: auto; margin-right: 12px; }
.navy { height: 30px; flex: none; background: #0f294e; display: flex; align-items: center; color: #fff; font-size: 10px; }
.pill { height: 28px; border: 1px solid #fff; border-radius: 14px; display: flex; align-items: center; }
.blue { background: #0480ad; font-weight: bold; }
.logical { width: 83px; font-size: 15px; padding-left: 1px; }
.logical span { margin: -1px 0 0 1px; letter-spacing: -.12px; }
.physical { width: 87px; margin-left: 2px; padding-left: 5px; font-size: 15px; }
.physical span { margin-left: 4px; letter-spacing: -.1px; }
.xy { margin-left: 3px; letter-spacing: -.03px; }
.root { margin-left: auto; margin-right: 4px; font-size: 11px; letter-spacing: -.15px; }
.round { width: 32px; height: 28px; border: 1px solid #fff; border-radius: 14px; display: flex; align-items: center; justify-content: center; flex: none; }
.gray { width: 30px; height: 26px; background: #666; border: 0; margin: 0 1px; }
.clock { width: 75px; margin: 0 0 0 1px; font-size: 11px; padding-left: 2px; letter-spacing: -.15px; }
.clock span { margin-left: 1px; }
.work { height: 577px; flex: none; border: 1px solid #828790; display: flex; justify-content: space-between; }
.topo { margin: -1px 0 0 -1px; }
.tiny { font-family: "Liberation Sans", Arial, sans-serif; font-size: 30px; font-weight: bold; fill: #3a3a50; }
.vscroll { width: 15px; background: #f0f0f0; display: flex; flex-direction: column; margin-right: 1px; }
.vthumb { height: 311px; background: #cdcdcd; margin-bottom: auto; }
.low { padding-left: 16.500px; }
.time { width: 71.500px; font-size: 11px; letter-spacing: -.22px; }
.low .round + .round { margin-left: 1px; }
.real { margin-left: auto; width: 94px; padding-left: 2px; font-size: 15px; }
.real span { margin: -1px 0 0 1px; letter-spacing: -.05px; }
.sim { width: 100px; margin-left: 2px; padding-left: 3px; font-size: 15px; }
.sim span { margin-left: 2px; letter-spacing: -.15px; }
.dock { height: 110px; flex: none; display: flex; }
.cats { width: 210px; flex: none; }
.catrow { display: flex; gap: 4px; padding-left: 5px; height: 30px; margin-top: 12px; }
.catrow svg:first-child { margin-right: 1px; }
.sel { background: #9ff; outline: 1px solid #457b84; outline-offset: -1px; }
.search { width: 204px; height: 20px; border: 1px solid #777; margin: 3px 0 0 3px; }
.search + .catrow { margin-top: 3px; }
.palette { width: 504px; flex: none; }
.list { height: 90px; border: 1px solid #828790; display: flex; flex-direction: column; justify-content: space-between; overflow: hidden; }
.models { display: flex; gap: 5px; padding: 2px 0 0 2px; }
.model { width: 35px; height: 35px; border: 1px solid #b4b4b4; border-radius: 5px; background: #e2e2e2; flex: none; display: flex; flex-direction: column; align-items: center; padding-top: 1px; }
.model span { font: 8.500px/10px "DejaVu Sans", sans-serif; letter-spacing: -.1px; }
.model:nth-child(6) span, .model:nth-child(7) span { letter-spacing: -.2px; font-size: 8px; }
.model.tight span { font-size: 8px; letter-spacing: -.75px; }
.hscroll { height: 15px; background: #f0f0f0; display: flex; margin-bottom: 1px; }
.hthumb { width: 93px; background: #cdcdcd; margin-right: auto; }
.hint { height: 20px; border: 1px solid #000; text-align: center; line-height: 18px; letter-spacing: -.08px; }
.split { width: 14px; height: 109px; margin: 1px 0 0 4px; flex: none; border-left: 1px solid #777; border-top: 1px solid #777; background: #f1f1f1; display: flex; align-items: center; padding-left: 2px; }
.scen { width: 139px; margin-left: 1px; border-left: 4px solid #f0f0f0; padding: 8px 0 0 2px; flex: none; }
.row { display: flex; align-items: center; }
.btn { background: #0f294e; color: #fff; border-radius: 6px; height: 24px; display: flex; align-items: center; justify-content: center; flex: none; letter-spacing: -.13px; }
.ibtn { width: 34px; height: 30px; margin-left: 5px; }
.combo { width: 78px; height: 20px; margin-left: 6px; border: 1px solid #777; display: flex; align-items: center; justify-content: space-between; padding: 0 3px 0 3px; }
.r2 { margin-top: 8px; }
.new { width: 33px; margin-left: 17px; }
.delete { width: 40px; margin-left: 19px; }
.toggle { width: 127px; margin-top: 8px; }
.pdu { flex: 1; margin: 1px 1px 1px 1px; border: 1px solid #828790; display: flex; font-size: 10.700px; }
.pdu span { height: 22px; line-height: 23px; padding-left: 4px; border-right: 1px solid #e0e0e0; flex: none; }
.pdu span:last-child { border: 0; }
.task { height: 40px; flex: none; display: flex; color: #fff; background: linear-gradient(90deg, #1b1e22 0, #202224 55%, #26262a 62%, #35231f 67%, #38241e 100%); font-family: "Open Sans", "Noto Sans", sans-serif; }
.start { width: 48px; display: flex; align-items: center; justify-content: center; flex: none; }
.find { width: 288px; background: #f2f2f2; border: 1px solid #c7c7c7; border-right: 0; color: #333; display: flex; align-items: center; padding-left: 10px; flex: none; }
.find span { font-size: 14px; margin-left: 11px; letter-spacing: -.3px; }
.fire { margin-left: auto; }
.app-btn { width: 48px; margin-right: 1.200px; display: flex; align-items: center; justify-content: center; flex: none; position: relative; }
.edge { margin-left: 1px; }
.open::after { content: ""; position: absolute; left: 4px; right: 4px; bottom: 0; height: 2px; background: #76b9ed; }
.current { background: #4b4c4f; }
.current::after { left: 0; right: 0; }
.tray { margin-left: auto; display: flex; align-items: center; font-size: 14px; letter-spacing: -.5px; }
.temp { width: 38px; margin-left: 10px; }
.sunny { width: 70px; }
.caret { margin-left: 15px; }
.one { margin-left: 8px; }
.net { margin-left: 7px; }
.vol { margin-left: 7px; }
.two { display: flex; flex-direction: column; align-items: center; font-size: 12px; line-height: 17px; letter-spacing: -.4px; }
.lang { width: 30px; margin-left: 8px; }
.date { width: 60px; margin-left: 8px; }
.bell { margin-left: 16px; }
.peek { width: 1px; height: 40px; background: #75655f; margin-left: 19px; margin-right: 5px; }
</style>
